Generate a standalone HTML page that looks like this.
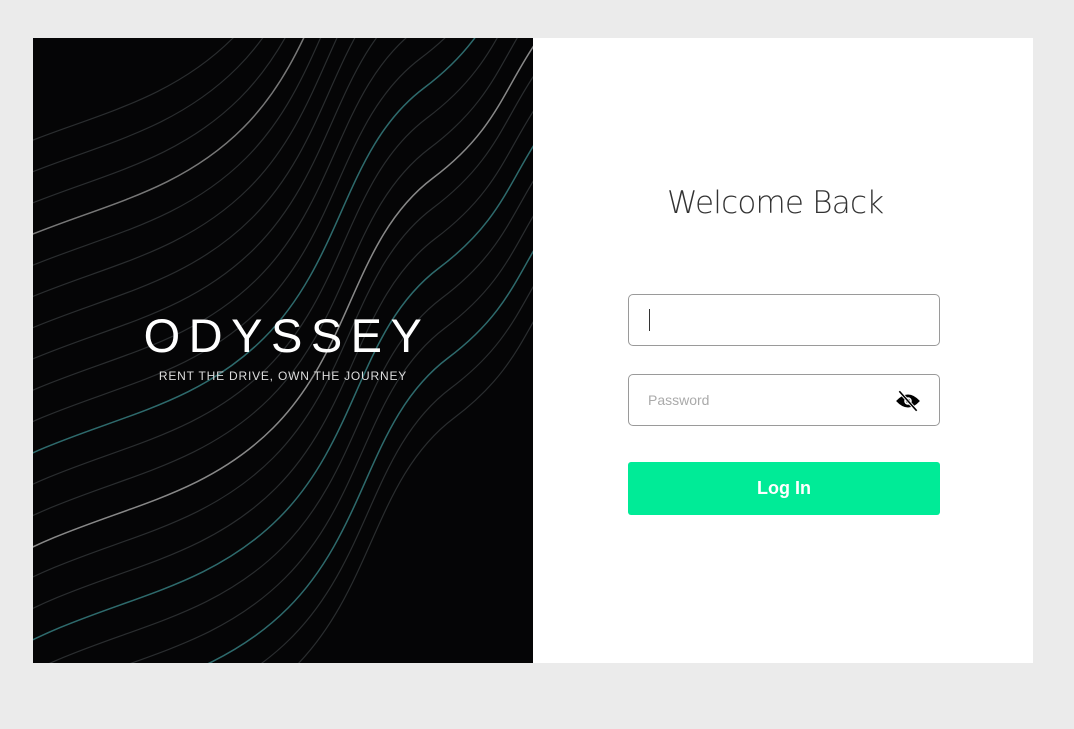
<!DOCTYPE html>
<html><head><meta charset="utf-8"><style>
html,body{margin:0;width:1074px;height:729px;overflow:hidden}
body{background:#ebebeb;font-family:"Liberation Sans",sans-serif;position:relative}
.card{position:absolute;left:33px;top:38px;width:1000px;height:625px;background:#fff}
.left{position:absolute;left:0;top:0;width:500px;height:625px;background:#050506;overflow:hidden}
.logo{position:absolute;left:0;width:500px;top:270px;text-align:center;color:#fff;font-size:47px;letter-spacing:8.5px;padding-left:8px;box-sizing:border-box}
.tag{position:absolute;left:0;width:500px;top:331px;text-align:center;color:#ddd;font-size:12px;letter-spacing:0.8px}
h1{position:absolute;left:634px;top:147px;margin:0;font-weight:300;color:#333;font-family:"DejaVu Sans","Liberation Sans",sans-serif;font-size:31px;letter-spacing:-0.8px}
.in{position:absolute;left:595px;width:312px;height:52px;border:1.5px solid #9a9a9a;border-radius:5px;box-sizing:border-box}
.btn{position:absolute;left:595px;top:424px;width:312px;height:53px;background:#00eb97;border-radius:3px;color:#fff;font-weight:bold;font-size:18px;text-align:center;line-height:53px}
</style></head><body>
<div class="card">
<div class="left">
<svg width="500" height="625" viewBox="0 0 500 625" style="position:absolute;left:0;top:0">
<defs><path id="c" d="M-40,560 C60,500 160,500 240,420 S320,230 400,170 S470,60 540,-10" fill="none"/></defs>
<g stroke="#2a2d2f" stroke-width="1.2" fill="none">
<use href="#c" transform="translate(-40,-420)"/><use href="#c" transform="translate(-36,-390)"/><use href="#c" transform="translate(-33,-360)"/><use href="#c" transform="translate(-30,-330)"/><use href="#c" transform="translate(-27,-300)"/><use href="#c" transform="translate(-24,-270)"/><use href="#c" transform="translate(-21,-240)"/><use href="#c" transform="translate(-18,-210)"/><use href="#c" transform="translate(-15,-180)"/><use href="#c" transform="translate(-12,-150)"/><use href="#c" transform="translate(-9,-120)"/><use href="#c" transform="translate(-6,-90)"/><use href="#c" transform="translate(-3,-60)"/><use href="#c" transform="translate(0,-30)"/><use href="#c"/><use href="#c" transform="translate(3,30)"/><use href="#c" transform="translate(6,60)"/><use href="#c" transform="translate(9,90)"/><use href="#c" transform="translate(12,120)"/><use href="#c" transform="translate(15,150)"/><use href="#c" transform="translate(18,180)"/><use href="#c" transform="translate(21,210)"/>
</g>
<use href="#c" stroke="#777" stroke-width="1.5" transform="translate(-30,-330)"/>
<use href="#c" stroke="#2d6a6c" stroke-width="1.5" transform="translate(-9,-120)"/>
<use href="#c" stroke="#888" stroke-width="1.5" transform="translate(0,-30)"/>
<use href="#c" stroke="#2d6a6c" stroke-width="1.5" transform="translate(6,60)"/>
<use href="#c" stroke="#2d6a6c" stroke-width="1.5" transform="translate(15,150)"/>
</svg>
<div class="logo">ODYSSEY</div>
<div class="tag">RENT THE DRIVE, OWN THE JOURNEY</div>
</div>
<h1>Welcome Back</h1>
<div class="in" style="top:256px"><div style="position:absolute;left:20px;top:14px;width:1px;height:22px;background:#333"></div></div>
<div class="in" style="top:336px"><span style="position:absolute;left:19px;top:17px;font-size:14px;color:#aaa">Password</span>
<svg style="position:absolute;left:266px;top:15px" width="26" height="22" viewBox="0 0 24 20"><path d="M1,10 Q12,-2 23,10 Q12,22 1,10Z" fill="#000"/><circle cx="12" cy="10" r="3.5" fill="#fff"/><circle cx="12" cy="10" r="2" fill="#000"/><path d="M4,1 L20,19" stroke="#fff" stroke-width="3"/><path d="M4,1 L20,19" stroke="#000" stroke-width="1.5"/></svg></div>
<div class="btn">Log In</div>
</div>
</body></html>
